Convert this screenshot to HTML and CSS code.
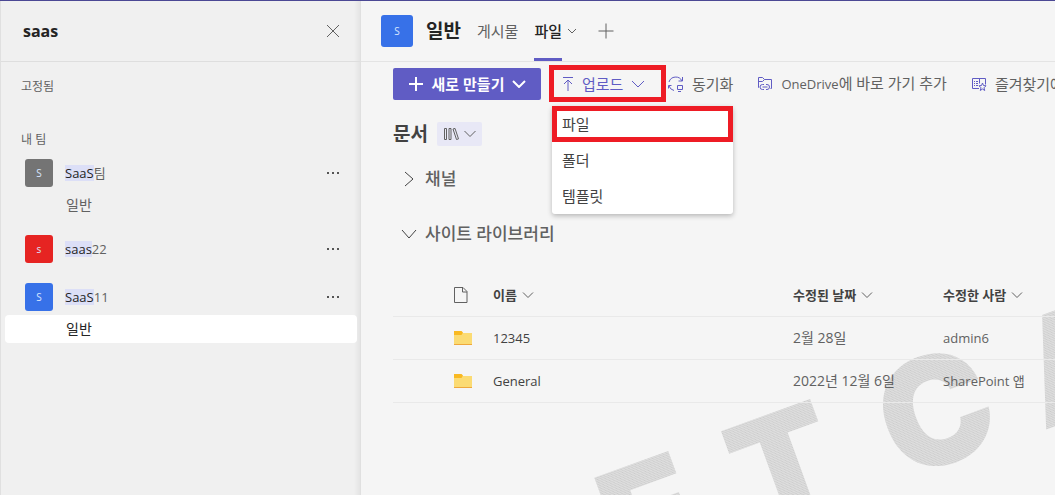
FILE: index.html
```html
<!DOCTYPE html>
<html lang="ko">
<head>
<meta charset="utf-8">
<meta name="viewport" content="width=device-width, initial-scale=1">
<title>saas - 일반 - 파일</title>
<link rel="stylesheet" href="styles.css">
</head>
<body>
<div class="app">
  <aside class="sidebar">
    <header class="search">
      <h1 class="search-term">saas</h1>
      <button class="icon-button" aria-label="닫기"><svg width="14" height="14" viewBox="0 0 14 14"><path d="M1 1l12 12M13 1L1 13"/></svg></button>
    </header>
    <h2 class="group pinned">고정됨</h2>
    <h2 class="group">내 팀</h2>
    <ul class="teams">
      <li>
        <div class="team"><span class="avatar gray">S</span><a href="#t1" class="team-name"><mark>SaaS</mark>팀</a>
          <button class="icon-button more" aria-label="기타 옵션"><svg width="14" height="4" viewBox="0 0 14 4"><path d="M1 1h2v2H1zM6 1h2v2H6zM11 1h2v2h-2z"/></svg></button></div>
        <a href="#c1" class="channel">일반</a>
      </li>
      <li>
        <div class="team"><span class="avatar red">s</span><a href="#t2" class="team-name"><mark>saas</mark>22</a>
          <button class="icon-button more" aria-label="기타 옵션"><svg width="14" height="4" viewBox="0 0 14 4"><path d="M1 1h2v2H1zM6 1h2v2H6zM11 1h2v2h-2z"/></svg></button></div>
      </li>
      <li>
        <div class="team"><span class="avatar blue">S</span><a href="#t3" class="team-name"><mark>SaaS</mark>11</a>
          <button class="icon-button more" aria-label="기타 옵션"><svg width="14" height="4" viewBox="0 0 14 4"><path d="M1 1h2v2H1zM6 1h2v2H6zM11 1h2v2h-2z"/></svg></button></div>
        <a href="#c3" class="channel selected">일반</a>
      </li>
    </ul>
  </aside>

  <main class="main">
    <svg class="watermark" width="694" height="494" viewBox="361 1 694 494" aria-hidden="true">
      <defs><pattern id="grain" width="3" height="3" patternUnits="userSpaceOnUse"><rect width="3" height="3" fill="#dedede"/><path d="M0 0h1v1H0zM1 1h1v1H1zM2 2h1v1H2z" fill="#cbcbcb"/></pattern></defs>
      <g fill="url(#grain)">
        <text transform="translate(597 477) rotate(-20)" x="-10" y="109">E</text>
        <text transform="translate(722 431) rotate(-20)" x="-5" y="109">T</text>
        <text transform="translate(935 410) rotate(-20)" x="0" y="55" text-anchor="middle">C</text>
        <text transform="translate(1045 430) rotate(-20)" x="-2" y="0">A</text>
      </g>
    </svg>

    <header class="channel-header">
      <span class="avatar blue large">S</span>
      <h2 class="channel-title">일반</h2>
      <nav class="tabs">
        <a href="#posts" class="tab">게시물</a>
        <a href="#files" class="tab active">파일</a>
        <svg class="tab-chevron" width="10" height="6" viewBox="0 0 10 6"><path d="M1 1l4 4 4-4"/></svg>
      </nav>
      <button class="icon-button" aria-label="탭 추가"><svg width="16" height="16" viewBox="0 0 16 16"><path d="M8 .5v15M.5 8h15"/></svg></button>
    </header>

    <div class="toolbar">
      <button class="primary">
        <svg width="16" height="16" viewBox="0 0 16 16"><path d="M8 1v14M1 8h14"/></svg>새로 만들기
        <svg width="14" height="8" viewBox="0 0 14 8"><path d="M1 1l6 6 6-6"/></svg>
      </button>
      <div class="upload">
        <button class="command upload-button">
          <svg width="12" height="16" viewBox="0 0 12 16"><path d="M1 1.500h10M6 15V4M2 8l4-4 4 4"/></svg>업로드
          <svg width="14" height="8" viewBox="0 0 14 8"><path d="M1 1l6 6 6-6"/></svg>
        </button>
        <div class="menu">
          <button class="menu-item highlighted">파일</button>
          <button class="menu-item">폴더</button>
          <button class="menu-item">템플릿</button>
        </div>
      </div>
      <button class="command">
        <svg width="16" height="16" viewBox="0 0 16 16"><path d="M1 6a7 7 0 0 1 13-1M14.500 1v4h-4M.5 12.500v-3h3M1 10a7 7 0 0 0 5 4.500M9.500 9.500h5v4h-5zM10 15.500h3"/></svg>동기화
      </button>
      <button class="command">
        <svg width="16" height="16" viewBox="0 0 16 16"><path d="M2 11.500H1.500v-10h4l2 2h7v9h-1M1.500 5.500h4l2-2"/><path d="M7 8.500H5.500a2.500 2.500 0 0 0 0 5H7M9 8.500h1a2.500 2.500 0 0 1 0 5H9M5.500 11h5"/></svg><span><span class="latin">OneDrive</span>에 바로 가기 추가</span>
      </button>
      <button class="command">
        <svg width="16" height="16" viewBox="0 0 16 16"><path d="M8 12.500H1.500v-10h13v6M8.500 2.500v5M3 5.500h1M5 5.500h2M3 7.500h1M5 7.500h2M3 9.500h1M5 9.500h2"/><path d="M11.500 7l1 2.500 2.500.3-2 2 .7 2.700-2.200-1.500-2.200 1.500.7-2.700-2-2 2.500-.3z"/></svg>즐겨찾기에 추가
      </button>
    </div>

    <div class="library">
      <h2 class="library-title">문서</h2>
      <button class="library-button" aria-label="라이브러리 선택">
        <svg width="16" height="14" viewBox="0 0 16 14"><path d="M1.500 1.500h2v11h-2zM6 1.500h2v11H6zM10 2l2-.6 3.500 10.500-2 .6z"/></svg>
        <svg width="12" height="8" viewBox="0 0 12 8"><path d="M.5 1L6 6.500 11.500 1"/></svg>
      </button>
    </div>
    <button class="section"><svg width="16" height="16" viewBox="0 0 16 16"><path d="M4 1l8 7-8 7"/></svg>채널</button>
    <button class="section open"><svg width="16" height="16" viewBox="0 0 16 16"><path d="M1 4l7 8 7-8"/></svg>사이트 라이브러리</button>

    <table class="files">
      <thead>
        <tr>
          <th class="type" aria-label="파일 형식"><svg width="14" height="16" viewBox="0 0 14 16"><path d="M.5.5h8.500l4 4v11H.5zM8.500.5v4.500H13"/></svg></th>
          <th class="name">이름<svg width="12" height="6" viewBox="0 0 12 6"><path d="M1 .5l5 5 5-5"/></svg></th>
          <th class="date">수정된 날짜<svg width="12" height="6" viewBox="0 0 12 6"><path d="M1 .5l5 5 5-5"/></svg></th>
          <th>수정한 사람<svg width="12" height="6" viewBox="0 0 12 6"><path d="M1 .5l5 5 5-5"/></svg></th>
        </tr>
      </thead>
      <tbody>
        <tr>
          <td class="type"><svg class="folder" width="18" height="14" viewBox="0 0 18 14"><path fill="#fbdb73" d="M0 2h18v12H0z"/><path fill="#f9b922" d="M0 0h7.500l1.500 1.500L7.500 4H0z"/><path fill="#eea83c" d="M0 13h18v1H0z"/></svg></td>
          <td><a href="#f1" class="file">12345</a></td><td class="modified">2월 28일</td><td>admin6</td>
        </tr>
        <tr>
          <td class="type"><svg class="folder" width="18" height="14" viewBox="0 0 18 14"><path fill="#fbdb73" d="M0 2h18v12H0z"/><path fill="#f9b922" d="M0 0h7.500l1.500 1.500L7.500 4H0z"/><path fill="#eea83c" d="M0 13h18v1H0z"/></svg></td>
          <td><a href="#f2" class="file">General</a></td><td class="modified">2022년 12월 6일</td><td>SharePoint 앱</td>
        </tr>
      </tbody>
    </table>
  </main>
</div>
</body>
</html>
```
FILE: styles.css
```css
* { box-sizing: border-box; }
body {
  margin: 0;
  font: 14px/20px "Open Sans", "Noto Sans CJK KR", sans-serif;
  color: #616161;
  background: #f5f5f5;
  overflow: hidden;
}
h1, h2, ul { margin: 0; padding: 0; }
ul { list-style: none; }
a { color: inherit; text-decoration: none; }
button { font: inherit; color: inherit; background: none; border: 0; padding: 0; white-space: nowrap; }
svg { flex: none; fill: none; stroke: currentColor; }

.app { display: flex; min-height: 100vh; border-top: 1px solid #4b4894; }

.sidebar {
  flex: 0 0 361px;
  background: linear-gradient(to left, #e2e2e2, #f0f0f0 7px);
  border-left: 1px solid #e0e0e0;
}
.search {
  display: flex; align-items: center; justify-content: space-between;
  height: 61px; padding: 0 21px 0 22px;
  border-bottom: 1px solid #dedede;
}
.search-term { font-size: 16px; color: #242424; }
.icon-button { display: flex; }
.group { padding-left: 20px; font-size: 12px; font-weight: 400; line-height: 20px; }
.pinned { margin: 15px 0 33px; }
.teams { display: grid; gap: 16px; padding: 9px 4px 0; }
.team { display: flex; align-items: center; height: 28px; margin: 0 17px 4px 20px; }
.team-name { flex: 1; margin-left: 12px; font-size: 13px; line-height: 16px; }
mark { display: inline-block; height: 16px; color: #242424; background: #dcdff7; }
.more path { fill: #555; stroke: none; }
.avatar {
  display: flex; align-items: center; justify-content: center;
  width: 28px; height: 28px; border-radius: 3px;
  font-size: 10px; color: #d8e6ff;
}
.gray { background: #747474; }
.red { background: #e62422; }
.blue { background: #3771e8; }
.large { width: 32px; height: 32px; }
.channel { display: block; height: 28px; padding-left: 61px; line-height: 28px; border-radius: 4px; }
.selected { color: #242424; background: #fff; }

.main { position: relative; flex: 1; min-width: 0; overflow: hidden; border-left: 1px solid #e0e0e0; margin-left: -1px; }
.watermark { position: absolute; top: 0; left: 0; z-index: -1; stroke: none; font: 900 150px Inter, sans-serif; }
.channel-header { display: flex; align-items: center; height: 61px; padding-left: 20px; border-bottom: 1px solid #e4e4e4; }
.channel-title { margin: 0 16px 0 13px; font-size: 19px; line-height: 28px; color: #242424; }
.tabs { display: flex; align-items: center; align-self: stretch; font-size: 15px; }
.tab { align-self: stretch; line-height: 60px; margin-right: 16px; }
.active { margin-right: 5px; font-weight: 500; color: #242424; border-bottom: 3px solid #605cc4; }
.tab-chevron { margin-right: 21px; }

.toolbar { display: flex; align-items: center; height: 43px; padding-left: 32px; font-size: 15px; }
.primary {
  display: flex; flex: none; align-items: center; justify-content: space-between;
  width: 148px; height: 32px; padding: 0 15px;
  font-weight: 700; color: #fff; background: #605cc4; border-radius: 2px;
}
.primary svg { stroke-width: 2; }
.upload { position: relative; flex: none; margin: 0 2px 0 8px; }
.command { display: flex; flex: none; align-items: center; gap: 8px; margin-right: 24px; }
.command svg { color: #605cc4; }
.latin { font-size: 13px; }
.upload-button { width: 117px; height: 37px; margin: 0; padding: 0 8px; color: #605cc4; border: 5px solid #ee1c25; }
.menu {
  position: absolute; z-index: 2; top: 41px; left: 3px;
  width: 181px; background: #fff; border-radius: 3px;
  box-shadow: 0 2px 5px rgba(0, 0, 0, .25);
}
.menu-item { display: block; width: 100%; height: 36px; padding-left: 10px; text-align: left; color: #424242; }
.highlighted { padding-left: 5px; border: 5px solid #ee1c25; }

.library { display: flex; align-items: center; gap: 9px; height: 58px; padding-left: 32px; }
.library-title { font-size: 19px; color: #424242; }
.library-button {
  display: flex; align-items: center; justify-content: space-between;
  width: 45px; height: 24px; padding: 0 6px;
  background: #e8e8f6; border-radius: 2px;
}
.section { display: flex; align-items: center; gap: 8px; height: 24px; margin: 4px 0 31px 40px; font-size: 17px; font-weight: 500; }
.section svg { color: #424242; }
.open { margin: 0 0 27px 40px; }

.files { width: calc(100% - 32px); margin-left: 32px; border-collapse: collapse; table-layout: fixed; text-align: left; font-size: 13px; }
.files th, .files td { height: 43px; padding: 0; border-bottom: 1px solid #e9e9e9; }
.files th { padding-top: 2px; font-weight: 700; color: #424242; }
.files th svg { color: #616161; }
.files th:not(.type) svg { margin: 0 0 2px 5px; }
.type { width: 100px; }
.files .type { padding-left: 61px; }
.type svg { display: block; }
.folder { stroke: none; }
.name { width: 300px; }
.date { width: 150px; }
.modified { font-size: 14px; }
.file { color: #424242; }
```
